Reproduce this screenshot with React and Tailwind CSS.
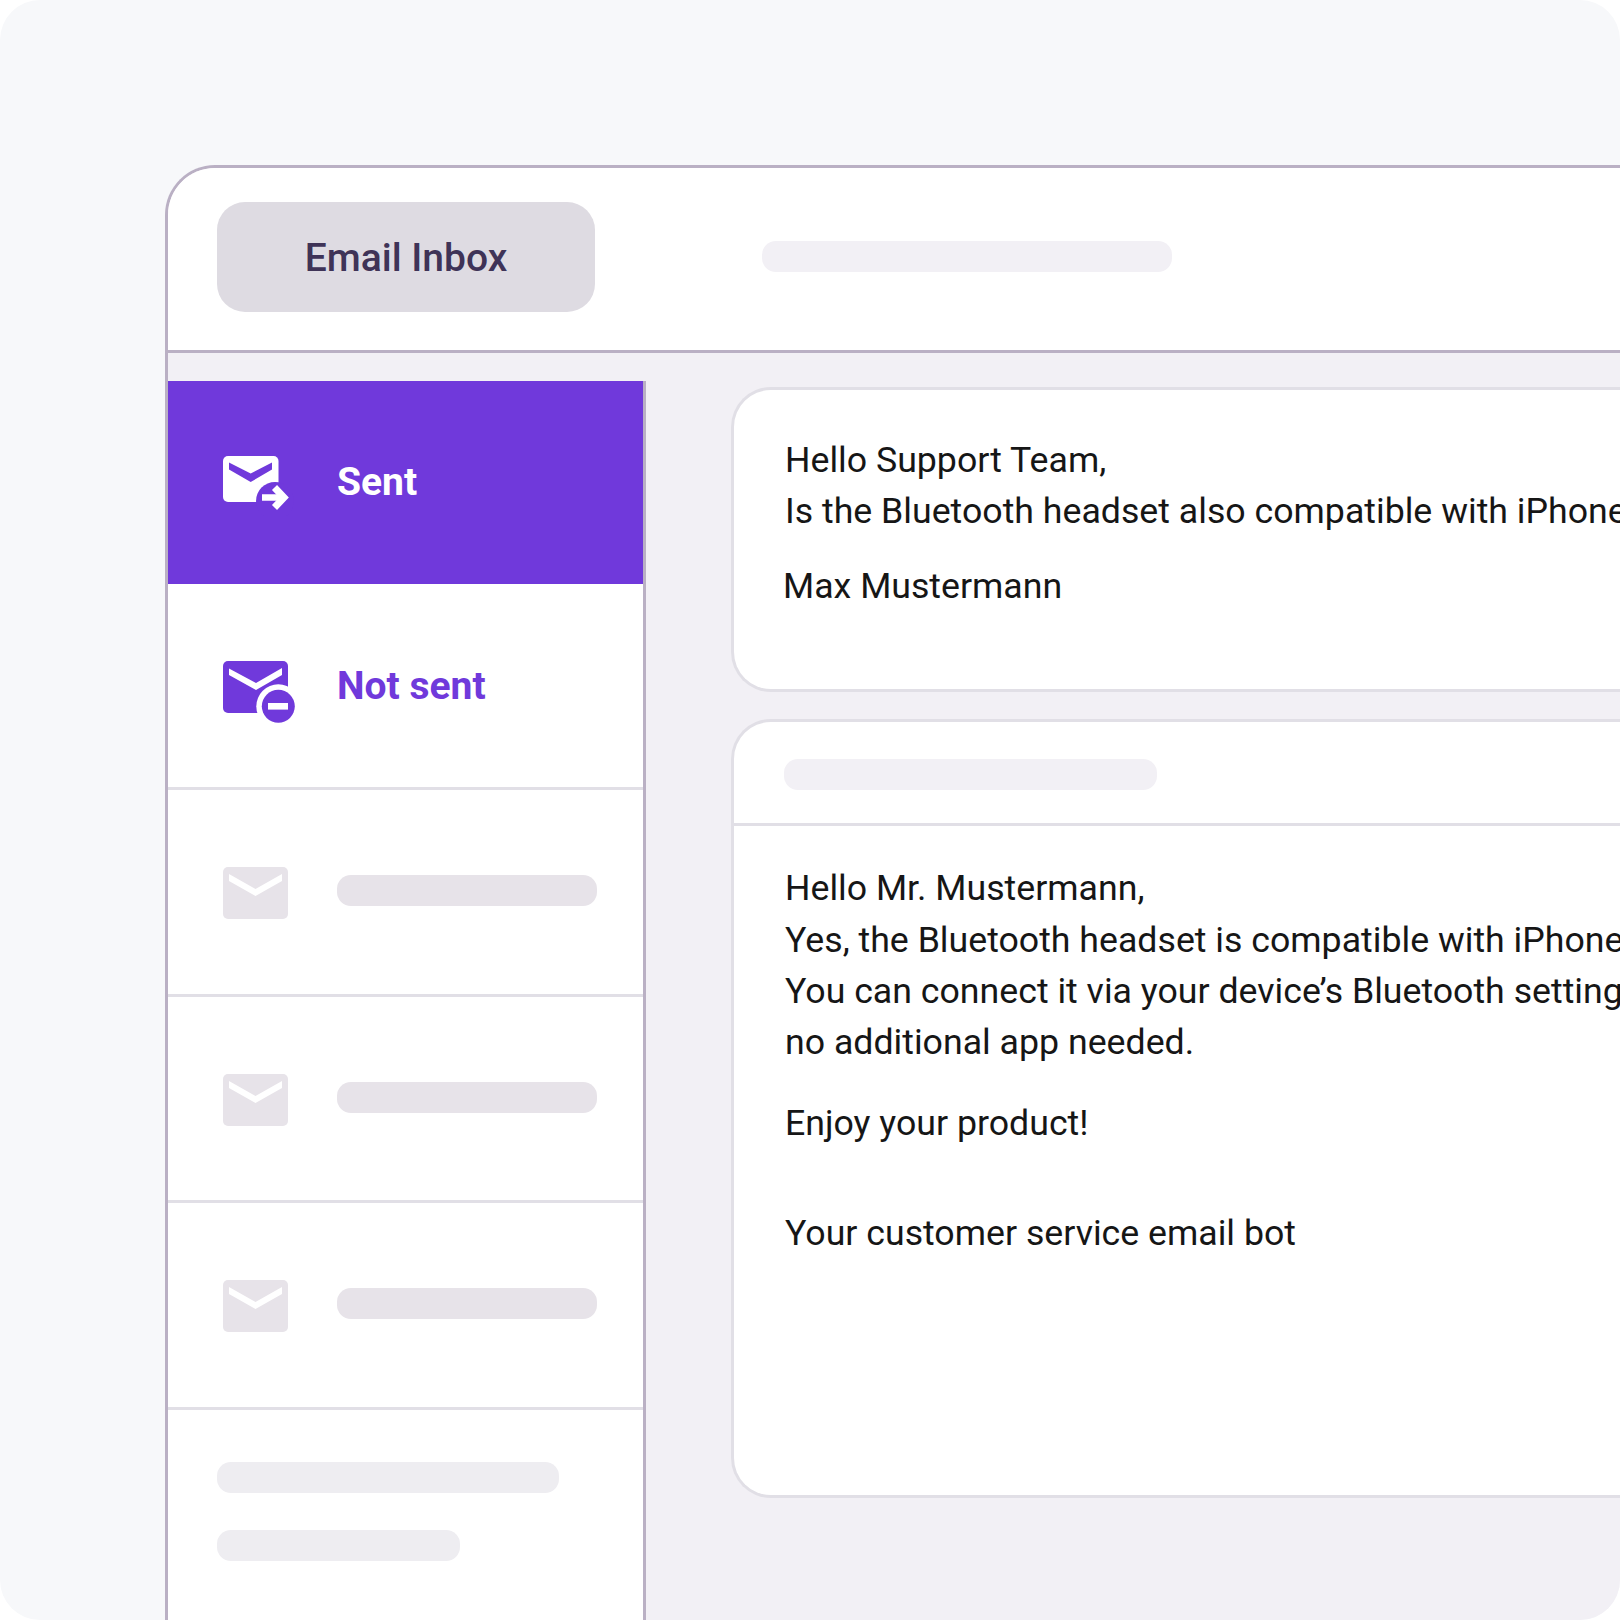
const ROBOTO = "font-['Roboto',sans-serif]";

function SentIcon() {
  return (
    <svg width="72" height="60" viewBox="0 0 72 60" className="shrink-0">
      <rect x="0" y="0" width="55.5" height="46" rx="5" fill="#fff" />
      <circle cx="52" cy="45" r="19" fill="#7039db" />
      <path d="M6 6.5 L27.7 17.5 L49 6.5 V13.5 L27.7 26 L6 13.5 Z" fill="#7039db" />
      <path d="M39 41.5 H59" stroke="#fff" strokeWidth="6.5" fill="none" />
      <path d="M51.5 31.5 L61 41.5 L51.5 51.5" stroke="#fff" strokeWidth="7" fill="none" />
    </svg>
  );
}

function NotSentIcon() {
  return (
    <svg width="72" height="62" viewBox="0 0 72 62" className="shrink-0">
      <rect x="0" y="0" width="65" height="52" rx="5" fill="#7039db" />
      <path d="M6 7.5 L33 22 L59 7 V14 L33 29 L6 14 Z" fill="#fff" />
      <circle cx="55.3" cy="45.3" r="22" fill="#fff" />
      <circle cx="55.3" cy="45.3" r="16.5" fill="#7039db" />
      <rect x="45" y="42" width="20" height="6.6" fill="#fff" />
    </svg>
  );
}

function GrayIcon() {
  return (
    <svg width="65" height="52" viewBox="0 0 65 52" className="shrink-0">
      <rect x="0" y="0" width="65" height="52" rx="5" fill="#e7e3e9" />
      <path d="M6 7 L32.5 22 L59 7 V14 L32.5 29 L6 14 Z" fill="#fff" />
    </svg>
  );
}

function GrayRow() {
  return (
    <div className="flex h-[206.5px] items-start gap-[49px] border-b-[3px] border-[#e1dfe6] pl-[55px] pt-[77px]">
      <GrayIcon />
      <div className="mt-[8px] h-[31px] w-[260px] rounded-[14px] bg-[#e7e3e9]" />
    </div>
  );
}

export default function App() {
  return (
    <div className={`h-[1620px] w-[1620px] overflow-hidden rounded-[40px] bg-[#f7f8fa] pl-[165px] pt-[165px] ${ROBOTO}`}>
      <div className="h-[1500px] w-[1600px] overflow-hidden rounded-tl-[50px] border-l-[3px] border-t-[3px] border-[#bab0c4] bg-[#f2f0f5]">
        <div className="flex h-[185px] items-center border-b-[3px] border-[#bab0c4] bg-white pl-[49px] pb-[5px]">
          <div className="flex h-[110px] w-[378px] items-center justify-center rounded-[28px] bg-[#dedbe2] pt-[3px] text-[39px] font-medium text-[#3f3357]">
            Email Inbox
          </div>
          <div className="ml-[167px] h-[31px] w-[410px] rounded-[14px] bg-[#f2f0f5]" />
        </div>

        <div className="flex pt-[28px]">
          <div className="h-[1300px] w-[478px] shrink-0 border-r-[3px] border-[#bab0c4] bg-white">
            <div className="flex h-[203px] items-start bg-[#7039db] pl-[55px] pt-[75px] text-[39px] font-bold text-white">
              <SentIcon />
              <span className="ml-[42px] mt-[1px] leading-[50px]">Sent</span>
            </div>
            <div className="flex h-[206px] items-start border-b-[3px] border-[#e1dfe6] pl-[55px] pt-[77px] text-[39px] font-bold text-[#7039db]">
              <NotSentIcon />
              <span className="ml-[42px] leading-[50px]">Not sent</span>
            </div>
            <GrayRow />
            <GrayRow />
            <GrayRow />
            <div className="flex flex-col gap-[37px] pl-[49px] pt-[52.5px]">
              <div className="h-[31px] w-[342px] rounded-[14px] bg-[#eeedf1]" />
              <div className="h-[31px] w-[243px] rounded-[14px] bg-[#eeedf1]" />
            </div>
          </div>

          <div className="flex flex-1 flex-col gap-[27px] pl-[85px] pt-[6px] text-[35.7px] leading-[51px] text-[#161616]">
            <div className="h-[305px] rounded-l-[40px] border-y-[3px] border-l-[3px] border-[#e1dfe6] bg-white pl-[51px] pt-[45px] whitespace-nowrap">
              <p>Hello Support Team,</p>
              <p>Is the Bluetooth headset also compatible with iPhone?</p>
              <p className="-ml-[2px] mt-[24px]">Max Mustermann</p>
            </div>

            <div className="h-[779px] rounded-l-[40px] border-y-[3px] border-l-[3px] border-[#e1dfe6] bg-white whitespace-nowrap">
              <div className="flex h-[104px] items-center border-b-[3px] border-[#e1dfe6] pl-[50px] pt-[4px]">
                <div className="h-[31px] w-[373px] rounded-[14px] bg-[#f2f0f5]" />
              </div>
              <div className="pl-[51px] pt-[37px]">
                <p>Hello Mr. Mustermann,</p>
                <p className="mt-[1px]">Yes, the Bluetooth headset is compatible with iPhone.</p>
                <p>You can connect it via your device’s Bluetooth settings,</p>
                <p>no additional app needed.</p>
                <p className="mt-[30px]">Enjoy your product!</p>
                <p className="mt-[59px]">Your customer service email bot</p>
              </div>
            </div>
          </div>
        </div>
      </div>
    </div>
  );
}
